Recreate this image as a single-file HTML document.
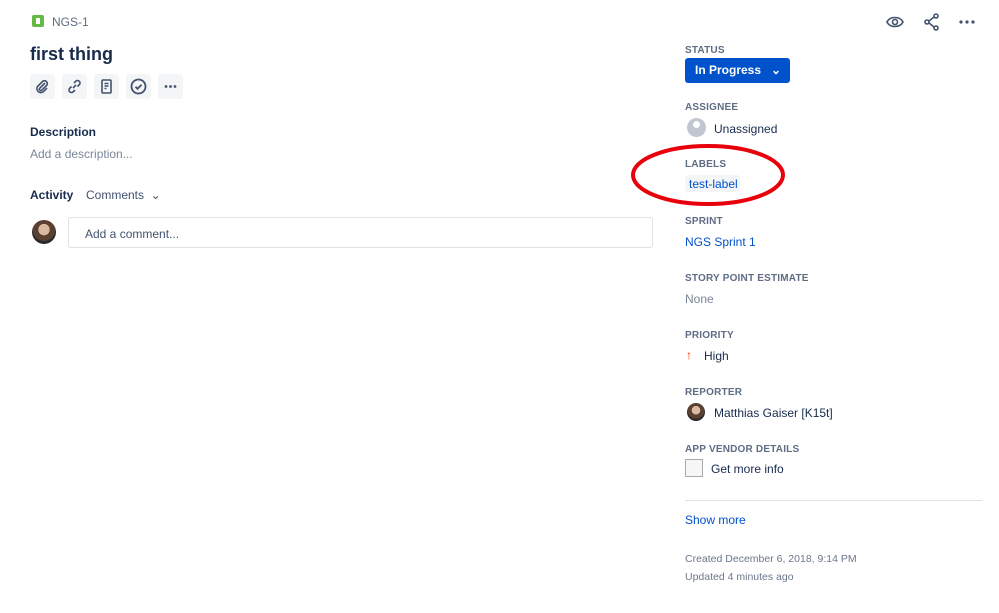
<!DOCTYPE html>
<html><head><meta charset="utf-8"><style>
body{margin:0;width:999px;height:613px;background:#fff;font-family:"Liberation Sans",sans-serif;color:#172b4d;position:relative;overflow:hidden}
.a{position:absolute}
.lbl{position:absolute;left:685px;font-size:10px;font-weight:bold;color:#5e6c84;letter-spacing:0.2px}
.val{position:absolute;font-size:12px;color:#172b4d}
.ib{position:absolute;top:74px;width:25px;height:25px;background:#f4f5f7;border-radius:3px}
.ib svg{position:absolute;left:4px;top:4px}
</style></head><body>
<div class="a" style="left:32px;top:15px;width:12px;height:12px;background:#65ba43;border-radius:2px"></div>
<div class="a" style="left:36px;top:18px;width:4px;height:6px;background:#fff"></div>
<div class="a" style="left:52px;top:15px;font-size:12px;color:#5e6c84">NGS-1</div>
<div class="a" style="left:30px;top:44px;font-size:18px;font-weight:bold;color:#172b4d">first thing</div>
<div class="ib" style="left:30px"><svg width="17" height="17" viewBox="0 0 17 17" fill="none" stroke="#42526e" stroke-width="1.6"><path d="M11 5 L5.5 10.5 a1.5 1.5 0 0 0 2 2 L13 7 a3 3 0 0 0-4-4 L3.5 8.5 a4 4 0 0 0 5.5 5.5 L13 10"/></svg></div>
<div class="ib" style="left:62px"><svg width="17" height="17" viewBox="0 0 17 17" fill="none" stroke="#42526e" stroke-width="1.6"><path d="M7 10 L10 7 M8 5 l2-2 a2.5 2.5 0 0 1 3.5 3.5 l-2 2 M9 12 l-2 2 a2.5 2.5 0 0 1-3.5-3.5 l2-2"/></svg></div>
<div class="ib" style="left:94px"><svg width="17" height="17" viewBox="0 0 17 17" fill="none" stroke="#42526e" stroke-width="1.6"><rect x="4" y="2" width="9" height="13" rx="1"/><path d="M6.5 5.5h4M6.5 8h4M6.5 10.5h2"/></svg></div>
<div class="ib" style="left:126px"><svg width="17" height="17" viewBox="0 0 17 17" fill="none" stroke="#42526e" stroke-width="1.8"><circle cx="8.5" cy="8.5" r="7"/><path d="M5.5 8.8l2 2 4-4"/></svg></div>
<div class="ib" style="left:158px"><svg width="17" height="17" viewBox="0 0 17 17" fill="#42526e"><circle cx="4" cy="8.5" r="1.4"/><circle cx="8.5" cy="8.5" r="1.4"/><circle cx="13" cy="8.5" r="1.4"/></svg></div>
<div class="a" style="left:30px;top:125px;font-size:12px;font-weight:bold">Description</div>
<div class="a" style="left:30px;top:147px;font-size:12px;color:#7a869a">Add a description...</div>
<div class="a" style="left:30px;top:188px;font-size:12px;font-weight:bold">Activity</div>
<div class="a" style="left:86px;top:188px;font-size:12px;color:#42526e">Comments &nbsp;⌄</div>
<div class="a" style="left:32px;top:220px;width:24px;height:24px;border-radius:50%;background:radial-gradient(circle at 50% 40%,#d9b9a0 0 30%,#5a4030 31% 60%,#2a2a2a 61%)"></div>
<div class="a" style="left:68px;top:217px;width:585px;height:31px;border:1px solid #dfe1e6;border-radius:3px;box-sizing:border-box"></div>
<div class="a" style="left:85px;top:227px;font-size:12px;color:#42526e">Add a comment...</div>
<svg class="a" style="left:885px;top:12px" width="20" height="20" viewBox="0 0 20 20" fill="none" stroke="#42526e" stroke-width="1.6"><path d="M2 10 C5 4 15 4 18 10 C15 16 5 16 2 10Z"/><circle cx="10" cy="10" r="2.5"/></svg>
<svg class="a" style="left:922px;top:12px" width="20" height="20" viewBox="0 0 20 20" fill="none" stroke="#42526e" stroke-width="1.6"><circle cx="14" cy="4" r="2"/><circle cx="5" cy="10" r="2"/><circle cx="14" cy="16" r="2"/><path d="M7 9l5-4M7 11l5 4"/></svg>
<svg class="a" style="left:957px;top:12px" width="20" height="20" viewBox="0 0 20 20" fill="#42526e"><circle cx="4" cy="10" r="1.6"/><circle cx="10" cy="10" r="1.6"/><circle cx="16" cy="10" r="1.6"/></svg>
<div class="lbl" style="top:45px">STATUS</div>
<div class="a" style="left:685px;top:58px;width:105px;height:25px;background:#0052cc;border-radius:3px;color:#fff;font-size:12px;font-weight:bold;line-height:25px;padding-left:10px;box-sizing:border-box">In Progress &nbsp;&nbsp;⌄</div>
<div class="lbl" style="top:102px">ASSIGNEE</div>
<div class="a" style="left:687px;top:118px;width:19px;height:19px;border-radius:50%;background:#c1c7d0"></div>
<div class="a" style="left:693px;top:121px;width:7px;height:7px;border-radius:50%;background:#fff"></div>
<div class="val" style="left:714px;top:122px">Unassigned</div>
<div class="lbl" style="top:159px">LABELS</div>
<div class="a" style="left:685px;top:175px;width:55px;height:17px;background:#f4f5f7;border-radius:3px"></div>
<div class="val" style="left:689px;top:177px;color:#0052cc">test-label</div>
<svg class="a" style="left:630px;top:140px" width="160" height="68"><ellipse cx="78" cy="35" rx="75" ry="29" fill="none" stroke="#e8000b" stroke-width="4"/></svg>
<div class="lbl" style="top:216px">SPRINT</div>
<div class="val" style="left:685px;top:235px;color:#0052cc">NGS Sprint 1</div>
<div class="lbl" style="top:273px">STORY POINT ESTIMATE</div>
<div class="val" style="left:685px;top:292px;color:#7a869a">None</div>
<div class="lbl" style="top:330px">PRIORITY</div>
<div class="val" style="left:686px;top:348px;color:#ff3300;font-weight:bold">↑</div>
<div class="val" style="left:704px;top:349px">High</div>
<div class="lbl" style="top:387px">REPORTER</div>
<div class="a" style="left:687px;top:403px;width:18px;height:18px;border-radius:50%;background:radial-gradient(circle at 50% 40%,#d9b9a0 0 30%,#5a4030 31% 60%,#2a2a2a 61%)"></div>
<div class="val" style="left:714px;top:406px">Matthias Gaiser [K15t]</div>
<div class="lbl" style="top:444px">APP VENDOR DETAILS</div>
<div class="a" style="left:685px;top:459px;width:18px;height:18px;border:1px solid #aaa;box-sizing:border-box;background:#f6f6f6"></div>
<div class="val" style="left:711px;top:462px">Get more info</div>
<div class="a" style="left:685px;top:500px;width:297px;height:1px;background:#dfe1e6"></div>
<div class="val" style="left:685px;top:513px;color:#0052cc">Show more</div>
<div class="a" style="left:685px;top:553px;font-size:10.5px;color:#6b778c">Created December 6, 2018, 9:14 PM</div>
<div class="a" style="left:685px;top:571px;font-size:10.5px;color:#6b778c">Updated 4 minutes ago</div>
</body></html>
